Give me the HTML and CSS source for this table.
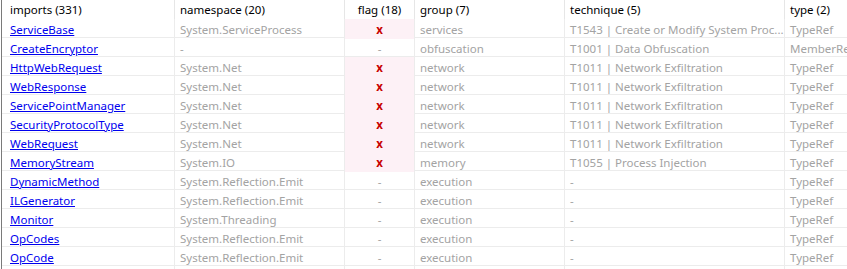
FILE: index.html
```html
<!DOCTYPE html>
<html>
<head>
<meta charset="utf-8">
<link rel="stylesheet" href="styles.css">
</head>
<body>
<div class="grid">
  <div class="row head">
    <div class="c c1">imports (331)</div>
    <div class="c c2">namespace (20)</div>
    <div class="c c3">flag (18)</div>
    <div class="c c4">group (7)</div>
    <div class="c c5">technique (5)</div>
    <div class="c c6">type (2)</div>
  </div>
  <div class="row">
    <div class="c c1"><a href="#">ServiceBase</a></div>
    <div class="c c2">System.ServiceProcess</div>
    <div class="c c3 flagged">x</div>
    <div class="c c4">services</div>
    <div class="c c5">T1543 | Create or Modify System Proc...</div>
    <div class="c c6">TypeRef</div>
  </div>
  <div class="row">
    <div class="c c1"><a href="#">CreateEncryptor</a></div>
    <div class="c c2">-</div>
    <div class="c c3">-</div>
    <div class="c c4">obfuscation</div>
    <div class="c c5">T1001 | Data Obfuscation</div>
    <div class="c c6">MemberRef</div>
  </div>
  <div class="row">
    <div class="c c1"><a href="#">HttpWebRequest</a></div>
    <div class="c c2">System.Net</div>
    <div class="c c3 flagged">x</div>
    <div class="c c4">network</div>
    <div class="c c5">T1011 | Network Exfiltration</div>
    <div class="c c6">TypeRef</div>
  </div>
  <div class="row">
    <div class="c c1"><a href="#">WebResponse</a></div>
    <div class="c c2">System.Net</div>
    <div class="c c3 flagged">x</div>
    <div class="c c4">network</div>
    <div class="c c5">T1011 | Network Exfiltration</div>
    <div class="c c6">TypeRef</div>
  </div>
  <div class="row">
    <div class="c c1"><a href="#">ServicePointManager</a></div>
    <div class="c c2">System.Net</div>
    <div class="c c3 flagged">x</div>
    <div class="c c4">network</div>
    <div class="c c5">T1011 | Network Exfiltration</div>
    <div class="c c6">TypeRef</div>
  </div>
  <div class="row">
    <div class="c c1"><a href="#">SecurityProtocolType</a></div>
    <div class="c c2">System.Net</div>
    <div class="c c3 flagged">x</div>
    <div class="c c4">network</div>
    <div class="c c5">T1011 | Network Exfiltration</div>
    <div class="c c6">TypeRef</div>
  </div>
  <div class="row">
    <div class="c c1"><a href="#">WebRequest</a></div>
    <div class="c c2">System.Net</div>
    <div class="c c3 flagged">x</div>
    <div class="c c4">network</div>
    <div class="c c5">T1011 | Network Exfiltration</div>
    <div class="c c6">TypeRef</div>
  </div>
  <div class="row">
    <div class="c c1"><a href="#">MemoryStream</a></div>
    <div class="c c2">System.IO</div>
    <div class="c c3 flagged">x</div>
    <div class="c c4">memory</div>
    <div class="c c5">T1055 | Process Injection</div>
    <div class="c c6">TypeRef</div>
  </div>
  <div class="row">
    <div class="c c1"><a href="#">DynamicMethod</a></div>
    <div class="c c2">System.Reflection.Emit</div>
    <div class="c c3">-</div>
    <div class="c c4">execution</div>
    <div class="c c5">-</div>
    <div class="c c6">TypeRef</div>
  </div>
  <div class="row">
    <div class="c c1"><a href="#">ILGenerator</a></div>
    <div class="c c2">System.Reflection.Emit</div>
    <div class="c c3">-</div>
    <div class="c c4">execution</div>
    <div class="c c5">-</div>
    <div class="c c6">TypeRef</div>
  </div>
  <div class="row">
    <div class="c c1"><a href="#">Monitor</a></div>
    <div class="c c2">System.Threading</div>
    <div class="c c3">-</div>
    <div class="c c4">execution</div>
    <div class="c c5">-</div>
    <div class="c c6">TypeRef</div>
  </div>
  <div class="row">
    <div class="c c1"><a href="#">OpCodes</a></div>
    <div class="c c2">System.Reflection.Emit</div>
    <div class="c c3">-</div>
    <div class="c c4">execution</div>
    <div class="c c5">-</div>
    <div class="c c6">TypeRef</div>
  </div>
  <div class="row">
    <div class="c c1"><a href="#">OpCode</a></div>
    <div class="c c2">System.Reflection.Emit</div>
    <div class="c c3">-</div>
    <div class="c c4">execution</div>
    <div class="c c5">-</div>
    <div class="c c6">TypeRef</div>
  </div>
  <div class="row">
    <div class="c c1"></div>
    <div class="c c2"></div>
    <div class="c c3"></div>
    <div class="c c4"></div>
    <div class="c c5"></div>
    <div class="c c6"></div>
  </div>
</div>
</body>
</html>
```

FILE: styles.css
```css
html, body {
  margin: 0;
  padding: 0;
  background: #ffffff;
  overflow: hidden;
}
body {
  font-family: "Noto Sans", "Open Sans", sans-serif;
  font-size: 11.5px;
  color: #a3a3a3;
}
.grid {
  margin-left: 1px;
  border-left: 1px solid #7a7a7a;
  width: 900px;
}
.row {
  display: grid;
  grid-template-columns: 172px 170px 70px 150px 220px 116px;
  height: 19px;
  border-bottom: 1px solid #ececec;
  box-sizing: border-box;
}
.row.head {
  border-bottom: none;
  color: #000000;
}
.c {
  line-height: 18px;
  padding-top: 2px;
  padding-left: 5px;
  white-space: nowrap;
  overflow-x: clip;
  overflow-y: visible;
  border-left: 1px solid #ececec;
  box-sizing: border-box;
}
.head .c {
  padding-top: 1px;
  border-left-color: #e6e6e6;
}
.c.c1 {
  border-left: none;
  padding-left: 8px;
}
.c.c3 {
  text-align: center;
  padding-left: 0;
}
.c.c5 {
  padding-right: 8px;
}
.flagged {
  background: #fdf1f6;
  color: #c80000;
  font-weight: bold;
}
a {
  color: #0000ee;
  text-decoration: underline;
}
```
